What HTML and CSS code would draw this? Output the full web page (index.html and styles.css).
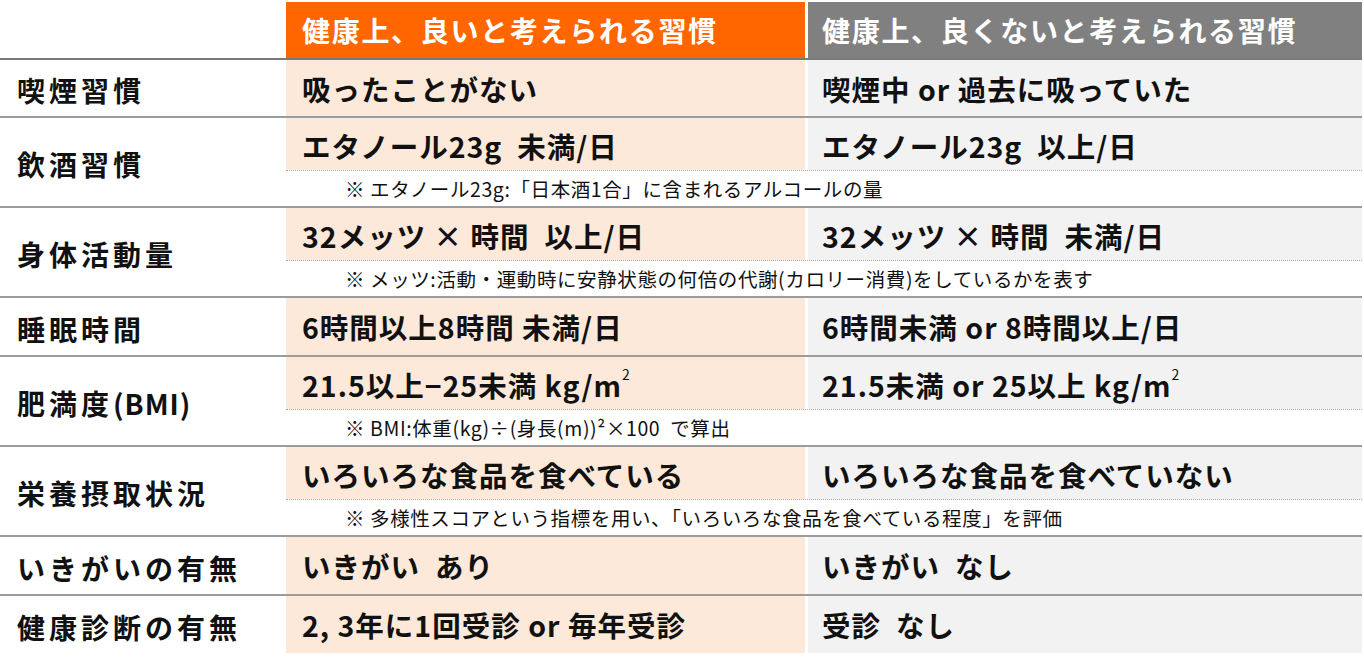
FILE: index.html
```html
<!DOCTYPE html>
<html lang="ja">
<head>
<meta charset="utf-8">
<title>生活習慣</title>
<link rel="stylesheet" href="styles.css">
</head>
<body>
<div class="table">
  <div class="row head">
    <div class="label"></div>
    <div class="body">
      <div class="pair">
        <div class="good">健康上、良いと考えられる習慣</div>
        <div class="bad">健康上、良くないと考えられる習慣</div>
      </div>
    </div>
  </div>

  <div class="row r1">
    <div class="label">喫煙習慣</div>
    <div class="body">
      <div class="pair">
        <div class="good">吸ったことがない</div>
        <div class="bad">喫煙中 or 過去に吸っていた</div>
      </div>
    </div>
  </div>

  <div class="row noted">
    <div class="label">飲酒習慣</div>
    <div class="body">
      <div class="pair">
        <div class="good">エタノール23g&nbsp; 未満/日</div>
        <div class="bad">エタノール23g&nbsp; 以上/日</div>
      </div>
      <div class="note">※ エタノール23g:「日本酒1合」に含まれるアルコールの量</div>
    </div>
  </div>

  <div class="row noted">
    <div class="label">身体活動量</div>
    <div class="body">
      <div class="pair">
        <div class="good">32メッツ × 時間&nbsp; 以上/日</div>
        <div class="bad">32メッツ × 時間&nbsp; 未満/日</div>
      </div>
      <div class="note">※ メッツ:活動・運動時に安静状態の何倍の代謝(カロリー消費)をしているかを表す</div>
    </div>
  </div>

  <div class="row">
    <div class="label">睡眠時間</div>
    <div class="body">
      <div class="pair">
        <div class="good">6時間以上8時間 未満/日</div>
        <div class="bad">6時間未満 or 8時間以上/日</div>
      </div>
    </div>
  </div>

  <div class="row noted">
    <div class="label">肥満度<span class="tight">(BMI)</span></div>
    <div class="body">
      <div class="pair">
        <div class="good">21.5以上−25未満 kg/m<sup>2</sup></div>
        <div class="bad">21.5未満 or 25以上 kg/m<sup>2</sup></div>
      </div>
      <div class="note">※ BMI:体重(kg)÷(身長(m))²×100&nbsp; で算出</div>
    </div>
  </div>

  <div class="row noted">
    <div class="label">栄養摂取状況</div>
    <div class="body">
      <div class="pair">
        <div class="good">いろいろな食品を食べている</div>
        <div class="bad">いろいろな食品を食べていない</div>
      </div>
      <div class="note">※ 多様性スコアという指標を用い、「いろいろな食品を食べている程度」を評価</div>
    </div>
  </div>

  <div class="row">
    <div class="label">いきがいの有無</div>
    <div class="body">
      <div class="pair">
        <div class="good">いきがい&nbsp; あり</div>
        <div class="bad">いきがい&nbsp; なし</div>
      </div>
    </div>
  </div>

  <div class="row last">
    <div class="label">健康診断の有無</div>
    <div class="body">
      <div class="pair">
        <div class="good">2, 3年に1回受診 or 毎年受診</div>
        <div class="bad">受診&nbsp; なし</div>
      </div>
    </div>
  </div>
</div>
</body>
</html>
```

FILE: styles.css
```css
html, body {
  margin: 0;
  padding: 0;
  background: #ffffff;
}

body {
  font-family: "Noto Sans CJK JP", "Noto Sans", sans-serif;
  color: #111111;
}

.table {
  width: 1362px;
  padding-top: 2px;
}

.row {
  display: flex;
  align-items: stretch;
  border-bottom: 2px solid #9c9c9c;
}

.row.head {
  border-bottom-color: #7a7a7a;
}

.row.last {
  border-bottom: none;
}

.label {
  width: 286px;
  flex: none;
  display: flex;
  align-items: center;
  padding-left: 17px;
  box-sizing: border-box;
  font-size: 28px;
  font-weight: 700;
  letter-spacing: 4px;
  padding-top: 4px;
  white-space: nowrap;
}

.label .tight {
  letter-spacing: 1px;
}

.body {
  flex: 1;
  display: flex;
  flex-direction: column;
}

.pair {
  display: grid;
  grid-template-columns: 519px 554px;
  column-gap: 3px;
  height: 57px;
}

.row.r1 .pair,
.row.head .pair {
  height: 56px;
}

.row.noted .pair {
  height: 52px;
  border-bottom: 1px dotted #a8a8a8;
}

.good, .bad {
  display: flex;
  align-items: center;
  font-size: 28.5px;
  font-weight: 700;
  letter-spacing: 1px;
  white-space: nowrap;
}

.good {
  background: #fde9d9;
  padding-left: 16px;
}

.bad {
  background: #f2f2f2;
  padding-left: 14px;
}

.row.head .good,
.row.head .bad {
  color: #ffffff;
  font-size: 28px;
  letter-spacing: 1.7px;
}

.row.head .good { background: #ff6600; }
.row.head .bad { background: #808080; }

.row.noted .good, .row.noted .bad {
  padding-top: 2px;
}

sup {
  font-size: 14px;
  font-weight: 400;
  line-height: 0;
  vertical-align: 0;
  position: relative;
  top: -10px;
  margin-left: 0;
}

.note {
  height: 35px;
  display: flex;
  align-items: center;
  padding-left: 59px;
  font-size: 19.5px;
  letter-spacing: 0.6px;
  font-weight: 400;
  color: #111111;
  white-space: nowrap;
}
```
